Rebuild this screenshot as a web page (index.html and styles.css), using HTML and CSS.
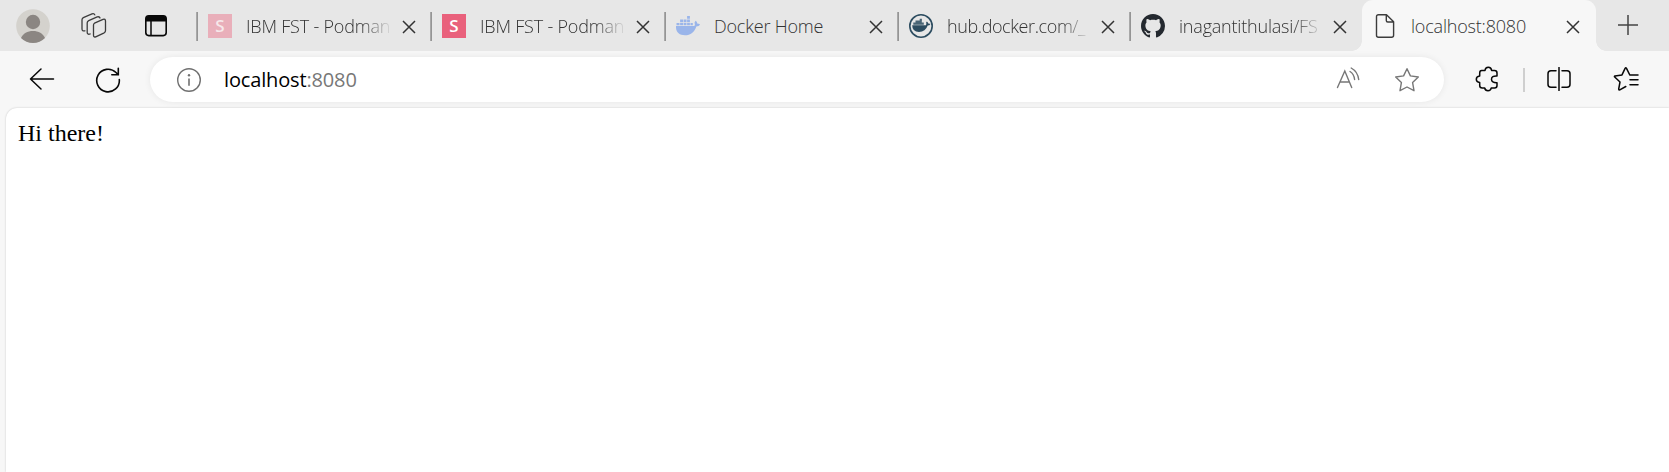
FILE: index.html
```html
<!DOCTYPE html>
<html lang="en">
<head>
<meta charset="utf-8">
<title>localhost:8080</title>
<link rel="stylesheet" href="styles.css">
</head>
<body>
<div class="browser">
  <header class="strip">
    <div class="controls">
      <svg class="avatar" viewBox="0 0 34 34"><circle cx="17" cy="17" r="16.8" fill="#d4d2cd"/><circle cx="17" cy="13" r="7.2" fill="#8b8682"/><path d="M5 29C7 24.500 11.500 22 17 22s10 2.500 12 7a17 17 0 0 1-24 0z" fill="#8b8682"/></svg>
      <svg class="workspaces" viewBox="0 0 26 26" fill="none" stroke="#3c3c3c" stroke-width="1.300" stroke-linejoin="round" stroke-linecap="round"><path d="M13.500 10.200 22 6.300q2.500-.8 2.500 1.800v9.500q0 1.500-1.300 2.200l-8.500 4q-2.200.8-2.200-1.500V12q0-1.200 1-1.800z"/><path d="M9.200 21q-3 1-3-1.800V9.800q0-1.500 1.500-2.200l8.500-3.700q2.300-.6 2.800 1.100"/><path d="M4 17.800Q1 18.500 1 16V6.800q0-1.500 1.300-2.200L11 .9q2.200-.7 2.800 1"/></svg>
      <svg class="tabmenu" viewBox="0 0 22 22"><rect x=".8" y=".8" width="20.400" height="19.800" rx="3" fill="none" stroke="#080808" stroke-width="1.600"/><path d="M1 6.500V3.500Q1 1 3.500 1h15Q21 1 21 3.500v3z" fill="#080808"/><path d="M6 6v14.500" stroke="#080808" stroke-width="1.500"/></svg>
    </div>
    <nav class="tabs">
      <div class="tab"><span class="fav s faded">S</span><span class="label fade">IBM FST - Podman</span><svg class="close" viewBox="0 0 14 14"><path d="M1 1l12 12M13 1 1 13"/></svg></div>
      <div class="tab"><span class="fav s">S</span><span class="label fade">IBM FST - Podman</span><svg class="close" viewBox="0 0 14 14"><path d="M1 1l12 12M13 1 1 13"/></svg></div>
      <div class="tab">
        <svg class="fav" viewBox="0 0 24 24" fill="#9ab5ea"><path d="M0 12h18.200c.9-.4.800-2.100.3-3.300l1-2c1.200.8 1.700 1.700 1.700 2.900 1 0 2 .1 2.800.7-.6 1.500-1.800 2.200-3.700 2.200C18.600 18 14.500 21.300 9 21.300 3 21.300-.4 18 0 12z"/><path d="M.5 9h3v2.300h-3zM4.100 9h3v2.300h-3zM7.700 9h2.800v2.300H7.700zM11.100 9h2.800v2.300h-2.800zM14.500 9h2.300v2.300h-2.300zM4.100 5.600h3v2.700h-3zM7.700 5.600h2.800v2.700H7.700zM11.100 5.600h2.800v2.700h-2.800zM11.100 2.100h2.800v2.700h-2.800z"/></svg>
        <span class="label">Docker Home</span><svg class="close" viewBox="0 0 14 14"><path d="M1 1l12 12M13 1 1 13"/></svg></div>
      <div class="tab">
        <svg class="fav" viewBox="0 0 24 24" fill="#2c4c60"><circle cx="12" cy="12" r="11.200" fill="none" stroke="#2c4c60" stroke-width="1.600"/><path d="M3.200 11.300H17q.7-1.600.1-2.800l.8-.9q1.200.8 1.300 2 1.300-.2 2.200.5-.8 1.500-2.700 1.500-2.200 6.300-8.700 6.300-6.800 0-6.800-6.600z"/><path d="M4.300 8.500h10.500v2.300H4.300zM6.500 6.500h6.300v2H6.500zM10.700 4.800h2.200v2h-2.200z" opacity=".85"/></svg>
        <span class="label fade narrow">hub.docker.com/_</span><svg class="close" viewBox="0 0 14 14"><path d="M1 1l12 12M13 1 1 13"/></svg></div>
      <div class="tab">
        <svg class="fav" viewBox="0 0 16 16" fill="#24292f"><path d="M8 0C3.580 0 0 3.580 0 8c0 3.540 2.290 6.530 5.470 7.590.4.070.55-.17.55-.38 0-.19-.01-.82-.01-1.490-2.010.37-2.530-.49-2.690-.94-.09-.23-.48-.94-.82-1.130-.28-.15-.68-.52-.01-.53.63-.01 1.080.58 1.230.82.72 1.210 1.870.87 2.330.66.070-.52.28-.87.51-1.070-1.780-.2-3.640-.89-3.640-3.950 0-.87.31-1.590.82-2.150-.08-.2-.36-1.020.08-2.120 0 0 .67-.21 2.200.82.64-.18 1.320-.27 2-.27s1.360.09 2 .27c1.530-1.040 2.200-.82 2.200-.82.44 1.100.16 1.920.08 2.120.51.56.82 1.270.82 2.150 0 3.070-1.870 3.750-3.650 3.950.29.25.54.73.54 1.480 0 1.070-.01 1.930-.01 2.200 0 .21.15.46.55.38A8.010 8.010 0 0 0 16 8c0-4.420-3.580-8-8-8z"/></svg>
        <span class="label fade">inagantithulasi/FS</span><svg class="close" viewBox="0 0 14 14"><path d="M1 1l12 12M13 1 1 13"/></svg></div>
      <div class="tab active">
        <svg class="fav" viewBox="0 0 24 24" fill="none" stroke="#3c3c3c" stroke-width="1.400" stroke-linejoin="round"><path d="M5.500.7H13.500L20.600 7.800V21.300Q20.600 23.300 18.600 23.300H5.500Q3.500 23.300 3.500 21.300V2.700Q3.500.7 5.500.7zM13.300.9V6.500Q13.300 8 14.800 8H20.500"/></svg>
        <span class="label">localhost:8080</span><svg class="close" viewBox="0 0 14 14"><path d="M1 1l12 12M13 1 1 13"/></svg></div>
    </nav>
    <svg class="newtab" viewBox="0 0 22 22"><path d="M11 1v20M1 11h20" stroke="#444" stroke-width="1.500"/></svg>
  </header>
  <div class="toolbar">
    <svg class="back" viewBox="0 0 26 24" fill="none" stroke="#080808" stroke-width="1.500" stroke-linecap="round" stroke-linejoin="round"><path d="M24.500 12H1.500M12 2 1.500 12 12 22"/></svg>
    <svg class="reload" viewBox="0 0 26 26" fill="none" stroke="#080808" stroke-width="1.600" stroke-linecap="round"><path d="M24.300 12.500A11.300 11.300 0 1 1 21 5.500L22.700 7.300M23.300 1.200V7.700H16.800"/></svg>
    <div class="address">
      <svg class="info" viewBox="0 0 26 26"><circle cx="13" cy="13" r="11.300" fill="none" stroke="#707070" stroke-width="1.400"/><path d="M13 11.500v7.300" stroke="#707070" stroke-width="1.600"/><circle cx="13" cy="8.200" r="1.200" fill="#707070"/></svg>
      <span class="url">localhost<span class="port">:8080</span></span>
      <svg class="read" viewBox="0 0 24 22" fill="none" stroke="#777" stroke-width="1.400" stroke-linecap="round"><path d="M1.500 20.500 8.800 4 15.700 20.500M4.200 15h9.100M14 4.500q4 2.500 4.600 8M15.200 1q6.500 3.500 7.500 11.500"/></svg>
      <svg class="star" viewBox="0 0 26 26" fill="none" stroke="#777" stroke-width="1.400" stroke-linejoin="round"><path d="M13 1.700 16.400 8.900 24.300 10 18.600 15.600 20 23.700 13 20 6 23.700 7.400 15.600 1.700 10 9.600 8.900z"/></svg>
    </div>
    <svg class="puzzle" viewBox="0 0 24 26" fill="none" stroke="#080808" stroke-width="1.500" stroke-linejoin="round"><path d="M6.700 4.500H10Q10.300 1.300 13.300 1.300T16.600 4.500H19.500Q22 4.500 22 7V10Q16.500 9.700 16.500 13.300T22 16.700V19.500Q22 22 19.500 22H16.200Q15.800 24.700 13 24.700T9.700 22H7.200Q4.700 22 4.700 19.500V16.600Q1.300 16.200 1.300 13.300T4.700 10V7Q4.700 4.500 6.700 4.500z"/></svg>
    <i class="divider"></i>
    <svg class="split" viewBox="0 0 24 24" fill="none" stroke="#080808" stroke-width="1.500" stroke-linecap="round"><path d="M12 .5v23M9 3.700H4Q1 3.700 1 6.700v10.600q0 3 3 3H9M15 3.700h5q3 0 3 3v10.600q0 3-3 3H15"/></svg>
    <svg class="favorites" viewBox="0 0 26 26" fill="none" stroke="#080808" stroke-width="1.500" stroke-linejoin="round" stroke-linecap="round"><path d="M16.800 9 13.500 2.400Q12.800 1.300 12.100 2.400L9 8.900 2 10Q1 10.300 1.700 11L7 16 5.700 23Q5.700 24.200 6.800 23.800L12.800 20.500M16.800 9H25M17 13.700H25M17 18.700H25"/></svg>
  </div>
  <main class="page">Hi there!</main>
</div>
</body>
</html>
```
FILE: styles.css
```css
* { box-sizing: border-box; }
body { margin: 0; background: #f7f7f7; font-family: "Open Sans", "Noto Sans", sans-serif; overflow: hidden; }
svg { display: block; flex: none; }
.browser { height: 472px; display: flex; flex-direction: column; }
.strip { height: 51px; flex: none; display: flex; background: #e7e7e7; }
.controls { width: 197px; flex: none; display: flex; align-items: center; padding-left: 16px; }
.avatar { width: 34px; height: 34px; margin-top: 1px; }
.workspaces { width: 26px; height: 26px; margin-left: 31px; }
.tabmenu { width: 22px; height: 22px; margin-left: 38px; }
.tabs { display: grid; grid-template-columns: 234px 234px 233px 232px 232px 234px; }
.tab { position: relative; display: flex; align-items: center; padding: 1px 15px 0 11px; }
.tab::before { content: ""; position: absolute; left: -1px; top: 12px; width: 1px; height: 29px; background: #a8a8a8; box-shadow: 1px 0 #959595; }
.fav { width: 24px; height: 24px; flex: none; }
.s { background: #e9617c; color: #fff; font: 600 17px/24px "Open Sans", sans-serif; text-align: center; }
.faded { background: #e9afba; color: #f6e8ea; }
.label { flex: 1; min-width: 0; margin-left: 14px; height: 28px; line-height: 28px; font-size: 18px; font-weight: 350; letter-spacing: -.2px; color: #333; white-space: nowrap; overflow: hidden; }
.fade { margin-right: 9px; -webkit-mask-image: linear-gradient(90deg, #000 78%, transparent 100%); mask-image: linear-gradient(90deg, #000 78%, transparent 100%); }
.narrow { letter-spacing: -.4px; }
.close { width: 14px; height: 14px; fill: none; stroke: #333; stroke-width: 1.5; margin-top: 1px; }
.active { background: #f7f7f7; border-radius: 11px 11px 0 0; padding-right: 16px; }
.active::before { left: -10px; top: 41px; width: 10px; height: 10px; background: radial-gradient(circle at 0 0, #e7e7e7 9.5px, #f7f7f7 10px); box-shadow: none; }
.active::after { content: ""; position: absolute; right: -10px; top: 41px; width: 10px; height: 10px; background: radial-gradient(circle at 100% 0, #e7e7e7 9.5px, #f7f7f7 10px); }
.newtab { width: 22px; height: 22px; margin: 14px 0 0 21px; }
.toolbar { height: 57px; flex: none; display: flex; align-items: center; padding: 0 29px 0 29px; }
.back { width: 26px; height: 24px; margin-top: -1px; }
.reload { width: 26px; height: 26px; margin: 0 0 0 40px; }
.address { width: 1294px; height: 45px; margin-left: 29px; flex: none; display: flex; align-items: center; padding: 0 24px 0 26px; background: #fff; border-radius: 23px; box-shadow: 0 0 7px rgba(0,0,0,.07); }
.info { width: 26px; height: 26px; }
.url { flex: 1; margin-left: 22px; font-size: 20px; line-height: 28px; letter-spacing: -.15px; color: #000; font-weight: 380; }
.port { color: #777; }
.read { width: 24px; height: 22px; margin-top: -4px; }
.star { width: 26px; height: 26px; margin-left: 34px; }
.puzzle { width: 24px; height: 26px; margin-left: 31px; margin-top: -1px; }
.divider { width: 2px; height: 24px; margin-left: 24px; background: #cfcfcf; }
.split { width: 24px; height: 24px; margin-left: 22px; margin-top: -1px; }
.favorites { width: 26px; height: 26px; margin-left: 42px; margin-top: -1px; }
.page { flex: 1; margin-left: 6px; padding: 11px 12px; background: #fff; border-radius: 11px 0 0 0; box-shadow: 0 0 2px rgba(0,0,0,.22); font: 24px/28px "Liberation Serif", serif; color: #000; }
```
